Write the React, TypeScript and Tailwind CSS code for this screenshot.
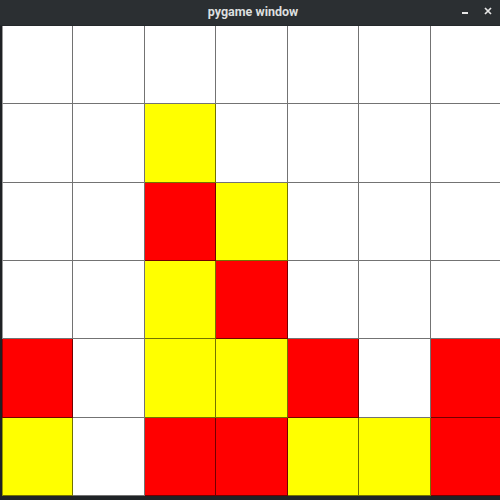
import React from "react";

type C = "W" | "R" | "Y";

const board: C[][] = [
  ["W", "W", "W", "W", "W", "W", "W"],
  ["W", "W", "Y", "W", "W", "W", "W"],
  ["W", "W", "R", "Y", "W", "W", "W"],
  ["W", "W", "Y", "R", "W", "W", "W"],
  ["R", "W", "Y", "Y", "R", "W", "R"],
  ["Y", "W", "R", "R", "Y", "Y", "R"],
];

const fill: Record<C, string> = {
  W: "bg-white",
  R: "bg-[#ff0000]",
  Y: "bg-[#ffff00]",
};

export default function App() {
  return (
    <div className="w-[500px] h-[500px] overflow-hidden bg-[#22262a] flex flex-col" style={{ fontFamily: 'Roboto, "Liberation Sans", sans-serif' }}>
      {/* title bar */}
      <div className="h-[26px] shrink-0 bg-[#2b2f32] border-b border-[#24282b] relative flex items-center justify-center">
        <span className="text-[12.5px] font-bold text-[#dcdfdf] pl-[6px] pb-[1px]">pygame window</span>
        <div className="absolute right-[32px] top-[12px] w-[6px] h-[2px] bg-[#e6e6e6]" />
        <svg className="absolute right-[8px] top-[7px]" width="8" height="8" viewBox="0 0 8 8">
          <path d="M1 1 L7 7 M7 1 L1 7" stroke="#e6e6e6" strokeWidth="1.7" />
        </svg>
      </div>

      <div className="flex shrink-0">
        <div className="w-[2px] shrink-0 bg-[#1e2124]" />
        <div className="grid grid-cols-[repeat(7,71.43px)] grid-rows-[repeat(6,78.33px)] shrink-0">
          {board.flatMap((row, r) =>
            row.map((c, i) => (
              <div
                key={`${r}-${i}`}
                className={`${fill[c]} border-r border-b border-black/55 ${i === 0 ? "border-l border-l-black/40" : ""}`}
              />
            ))
          )}
        </div>
      </div>
      <div className="flex-1 bg-[#1f2326]" />
    </div>
  );
}
